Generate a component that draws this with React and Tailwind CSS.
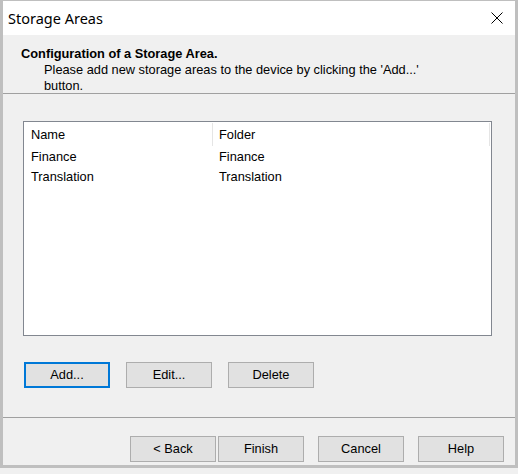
import React from 'react';

const rows = [
  { name: 'Finance', folder: 'Finance' },
  { name: 'Translation', folder: 'Translation' },
];

const DialogButton = ({ children, focused = false }) => (
  <button
    type="button"
    className={
      focused
        ? 'w-[86px] h-[26px] bg-[#e1e1e1] border-2 border-[#0078d7] text-black'
        : 'w-[86px] h-[26px] bg-[#e1e1e1] border border-[#adadad] text-black'
    }
  >
    {children}
  </button>
);

const App = () => {
  return (
    <div className="w-[518px] h-[474px] bg-[#f0f0f0] font-['Liberation_Sans',Arial,sans-serif] text-[12.8px] text-black">
      <div className="w-[518px] h-[468px] flex flex-col border-t border-x-[3px] border-b-[3px] border-[#bfbfbf]">
        {/* Title bar */}
        <div className="h-[34px] bg-white flex items-center justify-between pl-[5px] pr-[12px]">
          <span className="font-['Noto_Sans',sans-serif] text-[14.5px] leading-none">Storage Areas</span>
          <svg width="12" height="12" viewBox="0 0 12 12" className="text-black">
            <path d="M0.5 0.5 L11.5 11.5 M11.5 0.5 L0.5 11.5" stroke="currentColor" strokeWidth="1" fill="none" />
          </svg>
        </div>

        {/* Header */}
        <div className="h-[59px] border-b border-[#a0a0a0] pl-[18px] pt-[11px]">
          <div className="font-bold leading-[16px]">Configuration of a Storage Area.</div>
          <p className="pl-[23px] w-[420px] leading-[16px]">
            Please add new storage areas to the device by clicking the 'Add...' button.
          </p>
        </div>

        {/* Content */}
        <div className="flex-1 flex flex-col pl-[20px] pr-[20px] pt-[27px]">
          <div className="w-[469px] h-[215px] bg-white border border-[#828790]">
            <div className="flex h-[25px] items-center">
              <div className="w-[189px] h-[23px] flex items-center pl-[7px] border-r border-[#e5e5e5]">Name</div>
              <div className="w-[277px] h-[23px] flex items-center pl-[6px] border-r border-[#e5e5e5]">Folder</div>
            </div>
            {rows.map((row) => (
              <div key={row.name} className="flex h-[20px] items-center">
                <div className="w-[190px] pl-[7px]">{row.name}</div>
                <div className="pl-[5px]">{row.folder}</div>
              </div>
            ))}
          </div>
          <div className="flex gap-[16px] pl-[1px] mt-[26px]">
            <DialogButton focused>Add...</DialogButton>
            <DialogButton>Edit...</DialogButton>
            <DialogButton>Delete</DialogButton>
          </div>
        </div>

        {/* Footer */}
        <div className="h-[48px] border-t border-[#a0a0a0] flex justify-end items-start pt-[18px] pr-[11px]">
          <div className="flex">
            <DialogButton>&lt; Back</DialogButton>
            <div className="ml-[2px]">
              <DialogButton>Finish</DialogButton>
            </div>
            <div className="ml-[14px]">
              <DialogButton>Cancel</DialogButton>
            </div>
            <div className="ml-[14px]">
              <DialogButton>Help</DialogButton>
            </div>
          </div>
        </div>
      </div>
    </div>
  );
};

export default App;
